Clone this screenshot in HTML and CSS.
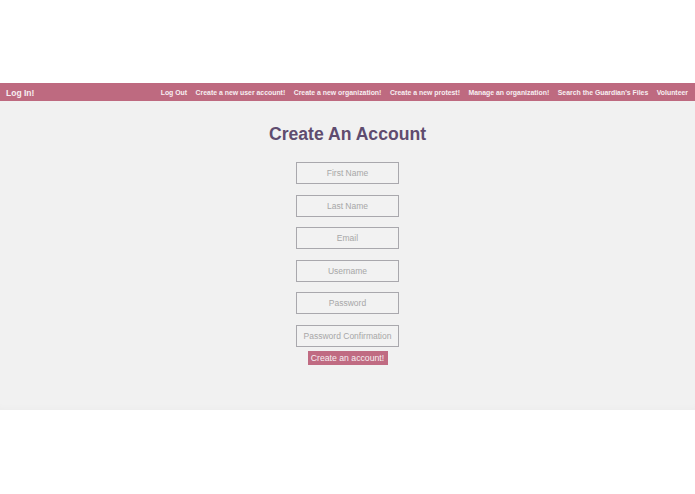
FILE: index.html
```html
<!DOCTYPE html>
<html lang="en">
<head>
<meta charset="utf-8">
<title>Create An Account</title>
<link rel="stylesheet" href="styles.css">
</head>
<body>
  <div class="top-space"></div>
  <nav class="navbar">
    <a class="brand" href="#">Log In!</a>
    <ul class="nav-links">
      <li><a href="#">Log Out</a></li>
      <li><a href="#">Create a new user account!</a></li>
      <li><a href="#">Create a new organization!</a></li>
      <li><a href="#">Create a new protest!</a></li>
      <li><a href="#">Manage an organization!</a></li>
      <li><a href="#">Search the Guardian's Files</a></li>
      <li><a href="#">Volunteer</a></li>
    </ul>
  </nav>
  <main class="content">
    <h1 class="title">Create An Account</h1>
    <form class="signup">
      <input class="field" type="text" placeholder="First Name">
      <input class="field" type="text" placeholder="Last Name">
      <input class="field" type="email" placeholder="Email">
      <input class="field" type="text" placeholder="Username">
      <input class="field" type="password" placeholder="Password">
      <input class="field" type="password" placeholder="Password Confirmation">
      <button class="submit" type="button">Create an account!</button>
    </form>
  </main>
</body>
</html>
```

FILE: styles.css
```css
html, body {
  margin: 0;
  padding: 0;
  background: #ffffff;
  font-family: "Liberation Sans", Arial, sans-serif;
}

.top-space {
  height: 83px;
}

.navbar {
  height: 18px;
  background: #be6a80;
  display: flex;
  align-items: center;
  justify-content: space-between;
  padding: 0 7px 0 6px;
}

.brand {
  color: #f7eef1;
  font-weight: bold;
  font-size: 8.5px;
  line-height: 10px;
  padding-top: 1px;
  text-decoration: none;
}

.nav-links {
  list-style: none;
  margin: 0;
  padding: 2px 0 0;
  display: flex;
  gap: 8.5px;
}

.nav-links a {
  display: block;
  color: #f7eef1;
  font-weight: bold;
  font-size: 6.9px;
  line-height: 10px;
  text-decoration: none;
  white-space: nowrap;
}

.content {
  background: #f1f1f1;
  height: 309px;
  display: flex;
  flex-direction: column;
  align-items: center;
  box-shadow: inset 0 -6px 8px -6px rgba(0, 0, 0, 0.03);
}

.title {
  margin: 22px 0 0;
  font-size: 17.6px;
  font-weight: bold;
  color: #5f4c6f;
  line-height: 22px;
}

.signup {
  margin-top: 17px;
  display: flex;
  flex-direction: column;
  align-items: center;
  gap: 10.6px;
}

.field {
  box-sizing: border-box;
  width: 103px;
  height: 22px;
  margin: 0;
  border: 1.5px solid #a9a8ad;
  background: #f2f2f2;
  text-align: center;
  font-family: "Liberation Sans", Arial, sans-serif;
  font-size: 8.5px;
  color: #555;
  padding: 0 4px;
}

.field::placeholder {
  color: #a7a7a7;
}

.submit {
  margin-top: -7px;
  width: 80px;
  height: 14px;
  padding: 0;
  border: none;
  background: #c06b82;
  color: #f7eef1;
  font-family: "Liberation Sans", Arial, sans-serif;
  font-size: 8.7px;
  line-height: 14px;
}
```
